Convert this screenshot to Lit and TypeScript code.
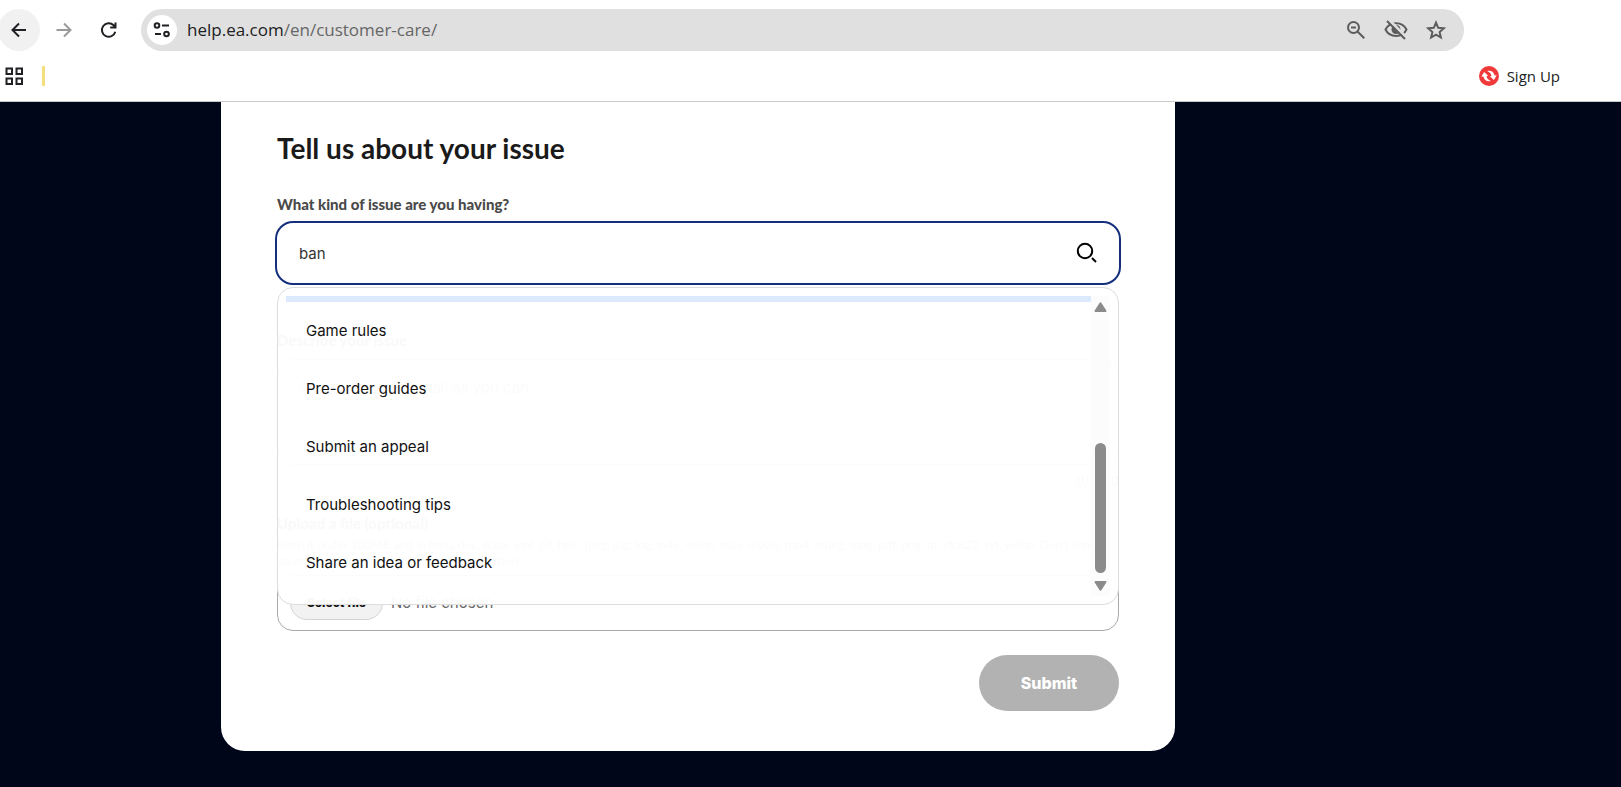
import { LitElement, html, css } from "lit";
import { customElement, state } from "lit/decorators.js";

@customElement("browser-bar")
class BrowserBar extends LitElement {
  static styles = css`
    :host { display: block; background: #fff; border-bottom: 1px solid #c8caca; font-family: "Open Sans", "Noto Sans", sans-serif; color: #202124; }
    * { box-sizing: border-box; }
    svg { display: block; fill: none; stroke: currentColor; }
    button { border: 0; padding: 0; background: none; color: inherit; display: grid; place-items: center; }
    .row { display: flex; align-items: center; }
    .nav { height: 60px; }
    .tool { width: 42px; height: 42px; border-radius: 21px; flex: none; }
    .tools { display: flex; gap: 3px; margin-left: -2px; }
    .current { background: #f1f1f1; }
    .forward { color: #9a9a9a; }
    .address { flex: 1; display: flex; align-items: center; height: 42px; margin: 0 157px 0 11px; padding: 0 16px 0 6px; border-radius: 21px; background: #e0e0e0; }
    .site { width: 30px; height: 30px; border-radius: 15px; background: #fff; flex: none; }
    .url { flex: 1; margin-left: 10px; font-size: 17px; line-height: 24px; color: #202124; text-decoration: none; }
    .path { color: #666; }
    .actions { display: flex; gap: 16px; color: #5c5c5c; }
    .actions button { width: 24px; height: 24px; }
    .marks { height: 41px; padding: 0 61px 9px 4px; }
    .mark { width: 3px; height: 20px; background: #f5df7d; margin-left: 18px; }
    .sign { display: flex; align-items: center; gap: 8px; margin-left: auto; font-size: 15px; line-height: 20px; color: #202124; text-decoration: none; }
    .badge { stroke: none; }
  `;
  render() {
    return html`
      <nav class="row nav" aria-label="Browser">
        <div class="tools">
          <button class="tool current" aria-label="Back"><svg width="18" height="18" viewBox="0 0 18 18" stroke-width="2"><path d="M16 9H3M9 2.500 2.500 9 9 15.500"/></svg></button>
          <button class="tool forward" aria-label="Forward"><svg width="18" height="18" viewBox="0 0 18 18" stroke-width="2"><path d="M1.500 9H15M9 2.500 15.500 9 9 15.500"/></svg></button>
          <button class="tool" aria-label="Reload"><svg width="18" height="18" viewBox="0 0 18 18" stroke-width="2"><path d="M15.300 10.800A6.800 6.800 0 1 1 13.600 4.200L15.500 6.200M15.500 1.500V6.500H10.200"/></svg></button>
        </div>
        <div class="address">
          <button class="site" aria-label="Site information"><svg width="18" height="16" viewBox="0 0 18 16" stroke-width="2"><circle cx="4" cy="3.500" r="2.300"/><path d="M9 3.500h7M2 12h6"/><circle cx="13.500" cy="12" r="2.300"/></svg></button>
          <a class="url" href="#">help.ea.com<span class="path">/en/customer-care/</span></a>
          <div class="actions">
            <button aria-label="Zoom"><svg width="20" height="20" viewBox="0 0 20 20" stroke-width="2"><circle cx="7.500" cy="7.500" r="5.500"/><path d="M11.700 11.700 18.300 18.300M5 7.500h5"/></svg></button>
            <button aria-label="Tracking protection"><svg width="24" height="22" viewBox="0 0 24 22" stroke-width="2"><path d="M1.500 10.500C5.500 2 18.500 2 22.500 10.500 18.500 19 5.500 19 1.500 10.500Z"/><circle cx="12" cy="10.500" r="4.500" fill="currentColor" stroke="none"/><path d="M5 1 22 18" stroke="#e0e0e0" stroke-width="3"/><path d="M3 2 21 20"/></svg></button>
            <button aria-label="Bookmark"><svg width="20" height="20" viewBox="0 0 20 20" stroke-width="2"><path d="m10 2.600 2.200 5.200 5.600.500-4.200 3.700 1.300 5.500-4.900-2.900-4.900 2.900 1.300-5.500L2.200 8.300l5.600-.500Z"/></svg></button>
          </div>
        </div>
      </nav>
      <div class="row marks">
        <button aria-label="Apps"><svg width="20" height="20" viewBox="0 0 20 20" stroke-width="2"><path d="M2.500 2.500h5.500v5.500h-5.500zM12.500 2.500h5.500v5.500h-5.500zM2.500 12.500h5.500v5.500h-5.500zM12.500 12.500h5.500v5.500h-5.500z"/></svg></button>
        <span class="mark"></span>
        <a class="sign" href="#"><svg class="badge" width="20" height="20" viewBox="0 0 20 20"><circle cx="10" cy="10" r="10" fill="#f03a3a"/><g fill="#fff" transform="rotate(-10 10 10)"><path d="M2.300 9.500 5.800 5.300l3.500 4.200H7.500c0 2.500 1.200 4 3.400 5.700C7 15.500 4.500 13 4.400 9.500Z"/><path d="M17.700 10.500l-3.500 4.200-3.500-4.200h1.800C12.500 8 11.300 6.500 9.100 4.800c3.900-.3 6.400 2.200 6.500 5.700Z"/></g></svg>Sign Up</a>
      </div>`;
  }
}

const TOPICS = ["Game rules", "Pre-order guides", "Submit an appeal", "Troubleshooting tips", "Share an idea or feedback"];

@customElement("issue-form")
class IssueForm extends LitElement {
  static styles = css`
    :host { display: block; font-family: Lato, sans-serif; font-size: 16px; color: #1a1a1a; }
    * { box-sizing: border-box; }
    .card { background: #fff; border-radius: 0 0 24px 24px; padding: 26px 56px 40px; }
    h1 { margin: 0 0 26px; font: 700 28px/40px Lato, sans-serif; }
    .label { display: block; font: 900 15px/20px Lato, sans-serif; color: #4a4a4a; }
    .search { position: relative; margin-top: 9px; }
    .query { display: block; width: 100%; height: 60px; border: 0; border-radius: 16px; outline: 2px solid #152f7d; padding: 0 60px 0 22px; font: 15px/24px Inter, sans-serif; color: #333; background: #fff; }
    .find { position: absolute; right: 20px; top: 18px; border: 0; padding: 0; background: none; }
    svg { display: block; }
    .menu { position: absolute; left: 0; right: 0; top: 64px; display: flex; padding: 8px; border: 1px solid #ddd; border-radius: 16px; background: rgb(255 255 255 / 0.97); }
    .list { flex: 1; margin: 0; padding: 0 0 4px; list-style: none; border-top: 6px solid #dce9fd; }
    .option { display: block; width: 100%; height: 58px; border: 0; padding: 0 20px; background: none; text-align: left; font: 15px/24px Inter, sans-serif; color: #111; }
    .track { display: flex; flex-direction: column; align-items: center; width: 19px; padding: 6px 0 5px; background: #fcfcfc; }
    .thumb { width: 11px; height: 130px; margin: auto 0 8px; border-radius: 6px; background: #8b8b8b; }
    .describe { margin-top: 47px; }
    .details { display: block; width: 100%; height: 106px; margin-top: 9px; padding: 16px 22px; border: 1px solid #aaa; border-radius: 16px; resize: none; font: 15px/24px Inter, sans-serif; }
    .details::placeholder { color: #767676; }
    .count { margin: 6px 0 0; text-align: right; font: 13px/20px Inter, sans-serif; color: #666; }
    .upload { margin-top: 22px; }
    .hint { margin: 4px 0 6px; font: 12px/16px Lato, sans-serif; color: #666; }
    .file { display: flex; align-items: center; gap: 8px; height: 56px; padding: 0 12px; border: 1px solid #aaa; border-radius: 16px; color: #666; font: 15px/24px Inter, sans-serif; }
    .choose { height: 34px; width: 93px; border: 1px solid #d4d4d4; border-radius: 17px; background: #f2f2f2; font: 800 12px/16px Inter, sans-serif; color: #111; }
    .submit { display: block; margin: 24px 0 0 auto; width: 140px; height: 56px; border: 0; border-radius: 28px; background: #b2b2b2; color: #fff; font: 800 16px/24px Inter, sans-serif; }
  `;
  @state() query = "ban";
  render() {
    return html`
      <form class="card" @submit=${(e: Event) => e.preventDefault()}>
        <h1>Tell us about your issue</h1>
        <label class="label" for="q">What kind of issue are you having?</label>
        <div class="search">
          <input class="query" id="q" type="text" autocomplete="off" .value=${this.query} @input=${(e: Event) => (this.query = (e.target as HTMLInputElement).value)} />
          <button class="find" type="button" aria-label="Search"><svg width="24" height="24" viewBox="0 0 24 24" fill="none" stroke="#000" stroke-width="2"><circle cx="10" cy="10" r="7.200"/><path d="m17 17 4 4"/></svg></button>
          <div class="menu">
            <ul class="list">${TOPICS.map((t) => html`<li><button class="option" type="button" @click=${() => (this.query = t)}>${t}</button></li>`)}</ul>
            <div class="track" aria-hidden="true">
              <svg width="13" height="10" viewBox="0 0 13 10"><path fill="#8b8b8b" stroke="#8b8b8b" stroke-linejoin="round" stroke-width="2" d="M6.500 1.300 11.500 9h-10Z"/></svg>
              <span class="thumb"></span>
              <svg width="13" height="10" viewBox="0 0 13 10"><path fill="#8b8b8b" stroke="#8b8b8b" stroke-linejoin="round" stroke-width="2" d="M6.500 8.700 11.500 1h-10Z"/></svg>
            </div>
          </div>
        </div>
        <label class="label describe" for="d">Describe your issue</label>
        <textarea class="details" id="d" placeholder="Share as much detail as you can"></textarea>
        <p class="count">0/1000</p>
        <span class="label upload" id="u">Upload a file (optional)</span>
        <p class="hint">Keep it under 100MB and in bmp, doc, docx, eml, gif, heic, jpeg, jpg, log, m4v, mime, mov, movie, mp4, mpeg, mpg, pdf, png, qt, rfc822, txt, webp. Don't send<br />yourself or anyone else's personal information.</p>
        <div class="file"><button class="choose" type="button" aria-describedby="u">Select file</button>No file chosen</div>
        <button class="submit" type="submit" disabled>Submit</button>
      </form>`;
  }
}

@customElement("app-root")
class AppRoot extends LitElement {
  static styles = css`
    :host { display: block; min-height: 100vh; background: #00061a; }
    .page { padding: 0 446px 36px 221px; }
  `;
  render() {
    return html`<browser-bar></browser-bar><main class="page"><issue-form></issue-form></main>`;
  }
}
